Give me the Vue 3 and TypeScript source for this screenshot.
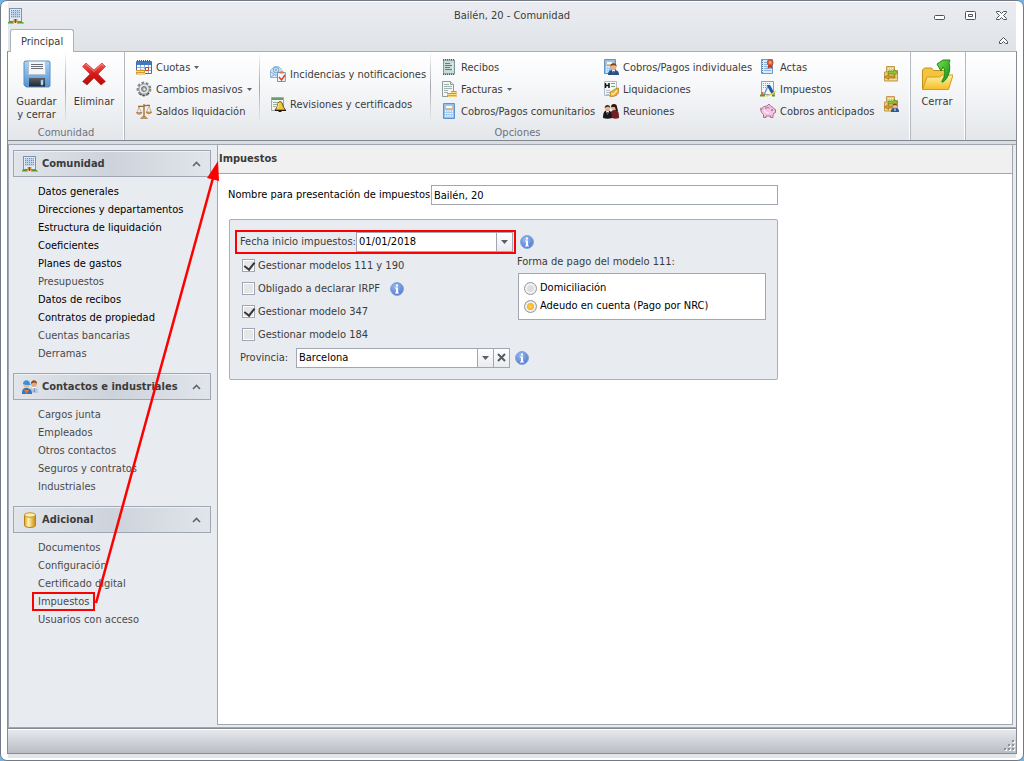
<script setup lang="ts">
import { ref } from 'vue'

interface Command {
  label: string
  icon: string
  menu?: boolean
}
interface Section {
  title: string
  icon: string
  items: { text: string; strong?: boolean; marked?: boolean }[]
}

const columns: Command[][] = [
  [
    { label: 'Cuotas', icon: 'calendar', menu: true },
    { label: 'Cambios masivos', icon: 'gear', menu: true },
    { label: 'Saldos liquidación', icon: 'scales' },
  ],
  [
    { label: 'Incidencias y notificaciones', icon: 'mail' },
    { label: 'Revisiones y certificados', icon: 'bell' },
  ],
  [
    { label: 'Recibos', icon: 'receipt' },
    { label: 'Facturas', icon: 'invoice', menu: true },
    { label: 'Cobros/Pagos comunitarios', icon: 'calc' },
  ],
  [
    { label: 'Cobros/Pagos individuales', icon: 'calcuser' },
    { label: 'Liquidaciones', icon: 'settle' },
    { label: 'Reuniones', icon: 'people' },
  ],
  [
    { label: 'Actas', icon: 'minutes' },
    { label: 'Impuestos', icon: 'tax' },
    { label: 'Cobros anticipados', icon: 'pig' },
  ],
  [
    { label: '', icon: 'transfer' },
    { label: '', icon: 'transferuser' },
  ],
]

const sections: Section[] = [
  {
    title: 'Comunidad',
    icon: 'building',
    items: [
      { text: 'Datos generales', strong: true },
      { text: 'Direcciones y departamentos', strong: true },
      { text: 'Estructura de liquidación', strong: true },
      { text: 'Coeficientes', strong: true },
      { text: 'Planes de gastos', strong: true },
      { text: 'Presupuestos' },
      { text: 'Datos de recibos', strong: true },
      { text: 'Contratos de propiedad', strong: true },
      { text: 'Cuentas bancarias' },
      { text: 'Derramas' },
    ],
  },
  {
    title: 'Contactos e industriales',
    icon: 'workers',
    items: [
      { text: 'Cargos junta' },
      { text: 'Empleados' },
      { text: 'Otros contactos' },
      { text: 'Seguros y contratos' },
      { text: 'Industriales' },
    ],
  },
  {
    title: 'Adicional',
    icon: 'database',
    items: [
      { text: 'Documentos' },
      { text: 'Configuración' },
      { text: 'Certificado digital' },
      { text: 'Impuestos', marked: true },
      { text: 'Usuarios con acceso' },
    ],
  },
]

const taxName = ref('Bailén, 20')
const startDate = ref('01/01/2018')
const province = ref('Barcelona')
const payment = ref('nrc')
const models = ref([
  { text: 'Gestionar modelos 111 y 190', on: true, info: false },
  { text: 'Obligado a declarar IRPF', on: false, info: true },
  { text: 'Gestionar modelo 347', on: true, info: false },
  { text: 'Gestionar modelo 184', on: false, info: false },
])
</script>

<template>
  <div class="window">
    <svg class="defs" width="0" height="0" aria-hidden="true">
      <defs>
        <linearGradient id="gBlue" x1="0" y1="0" x2="0" y2="1"><stop offset="0" stop-color="#a9d4f5" /><stop offset="1" stop-color="#4f93d4" /></linearGradient>
        <linearGradient id="gRed" x1="0" y1="0" x2="0" y2="1"><stop offset="0" stop-color="#f0605a" /><stop offset="0.5" stop-color="#d41a1a" /><stop offset="1" stop-color="#b50d0d" /></linearGradient>
        <linearGradient id="gGold" x1="0" y1="0" x2="0" y2="1"><stop offset="0" stop-color="#fff0a0" /><stop offset="1" stop-color="#f6bd28" /></linearGradient>
        <linearGradient id="gDb" x1="0" y1="0" x2="1" y2="0"><stop offset="0" stop-color="#e0a020" /><stop offset="0.35" stop-color="#fff3b0" /><stop offset="1" stop-color="#d08a08" /></linearGradient>
        <linearGradient id="gGreen" x1="0" y1="0" x2="1" y2="1"><stop offset="0" stop-color="#7be04a" /><stop offset="1" stop-color="#158c18" /></linearGradient>
        <linearGradient id="gSteel" x1="0" y1="0" x2="0" y2="1"><stop offset="0" stop-color="#5a6068" /><stop offset="1" stop-color="#22262b" /></linearGradient>
        <radialGradient id="gInfo" cx="0.4" cy="0.3" r="0.8"><stop offset="0" stop-color="#9dbcf0" /><stop offset="1" stop-color="#4672cc" /></radialGradient>
      </defs>
      <symbol id="building" viewBox="0 0 16 16">
        <rect x="1.5" y="0.5" width="12" height="13" fill="#e3ecf6" stroke="#7e91ad" />
        <path d="M3 2h9v8H3z" fill="#bcd3ea" />
        <path d="M3 2.500h9M3 4.500h9M3 6.500h9M3 8.500h9" stroke="#6f94be" stroke-dasharray="1 1" />
        <path d="M5.500 11h4l-.5 3.500h-3z" fill="#d9822f" /><path d="M7 11h1v4H7z" fill="#8d4413" />
        <path d="M0 15.500c0-2 1.500-2.500 2.500-2 1-1.500 2.500-.5 2.500.5l1 1.500zM9 15.500c0-1.500 1-2 2-1.500 1-1.500 2.500-1 3 0 1 0 1.800.5 2 1.500z" fill="#5d9a2a" />
      </symbol>
      <symbol id="floppy" viewBox="0 0 28 28">
        <path d="M2 1h24l1 1v24l-1 1H3l-2-2V2z" fill="url(#gBlue)" stroke="#5a8fc4" />
        <path d="M5.500 1.500h17v13h-17z" fill="#f4f6f8" stroke="#b4c4d4" />
        <path d="M8 4.500h12M8 6.500h12M8 8.500h12" stroke="#6c7076" />
        <path d="M6 18h16v8.500H6z" fill="url(#gSteel)" /><path d="M18 20h2v5h-2z" fill="#cbe3f7" stroke="#7eb3e0" stroke-width=".6" />
      </symbol>
      <symbol id="cross" viewBox="0 0 24 24">
        <path d="M4 1l8 7 8-7 3.500 3.500-7.500 7.500 7.500 7.500L19 23l-7-7-7 7-4.500-3.500L8 12 .5 4.500z" fill="url(#gRed)" stroke="#c22" stroke-width=".6" />
        <path d="M4 2l8 7.500L20 2l2 2" fill="none" stroke="#f6908a" stroke-width=".8" />
      </symbol>
      <symbol id="calendar" viewBox="0 0 16 16">
        <path d="M.5 2.500h15v12H.5z" fill="#fff" stroke="#3f6fb0" /><path d="M1 3h14v3H1z" fill="#3f7ac4" />
        <path d="M1 1.500h14" stroke="#555" stroke-dasharray="1 1" />
        <path d="M4.500 6v8M8.500 6v8M12.500 6v8M1 8.500h14M1 11.500h14" stroke="#8cb2de" />
        <path d="M9.500 8.500h3v3h-3z" fill="#fff" stroke="#d93a20" />
        <path d="M0 11h5v-1h4v5.500H0z" fill="#d39b2c" /><path d="M0 12.500h8M1 14.500h8M5 10.500h4" stroke="#f5d980" />
      </symbol>
      <symbol id="gear" viewBox="0 0 16 16">
        <circle cx="8" cy="8" r="6.200" fill="none" stroke="#85888c" stroke-width="2.400" stroke-dasharray="2.600 1.730" />
        <circle cx="8" cy="8" r="5.200" fill="#e3e4e6" stroke="#85888c" stroke-width=".8" /><circle cx="8" cy="8" r="2.400" fill="#aeb1b5" stroke="#66696d" /><circle cx="8.500" cy="8.500" r="1" fill="#f6f6f6" />
        <path d="M4 13c3 2.500 7 2 9-1.500" fill="none" stroke="#4a4c50" stroke-width="1.200" stroke-dasharray="2 1" />
      </symbol>
      <symbol id="scales" viewBox="0 0 16 16">
        <path d="M8 1v13M2 3.500c3-.5 4 .5 6-.5s4-.5 6-.5" fill="none" stroke="#9a6a30" stroke-width="1.300" />
        <path d="M3 4L1 9.500M3 4l2.500 5.500M13 3l-2.500 6M13 3l2.200 6" fill="none" stroke="#c9a06c" stroke-width=".8" />
        <path d="M.3 9.500h5.700c-.5 2.400-5.200 2.400-5.700 0zM10 9h5.700c-.5 2.400-5.200 2.400-5.700 0zM4.500 15.500l2-2h3l2 2z" fill="#d39a52" stroke="#94632a" stroke-width=".5" />
      </symbol>
      <symbol id="mail" viewBox="0 0 16 16">
        <path d="M.5 4.500L4 .8h5l3 3.700v7H.5z" fill="#d6e8f7" stroke="#8fb5d8" /><path d="M1 6l5 3.500L11 6M1 11l4-3" fill="none" stroke="#7fabd4" />
        <circle cx="6" cy="4" r="2.800" fill="#c5e0f5" stroke="#7aa7d0" /><circle cx="6" cy="4" r="1" fill="#7aa7d0" />
        <path d="M7.500 6.500h7.800v9H7.500z" fill="#f4f7fb" stroke="#7b90b4" /><path d="M9.500 5.500h4v2h-4z" fill="#e5763b" /><path d="M9 11l2.500 3 3.500-5" fill="none" stroke="#d8432c" stroke-width="1.500" />
      </symbol>
      <symbol id="bell" viewBox="0 0 16 16">
        <path d="M1.500 1.500h12v13h-12z" fill="#f3f4f2" stroke="#a1a8aa" /><path d="M2 2h11v2H2z" fill="#6d9b70" /><path d="M3 6.500h8M3 8.500h6M3 10.500h3" stroke="#9ab09c" />
        <path d="M10 5.500c3 .5 2.500 4 3.500 5.500l2 3H5l2-3c1-2 0-4.500 3-5.500z" fill="#f4c536" stroke="#4a350c" stroke-width=".8" /><path d="M9 7c-1 1-.5 3-1.500 5" fill="none" stroke="#fff2a6" /><path d="M5 14h11v1h-4l-1 1H9l-1-1H5z" fill="#241b0c" />
      </symbol>
      <symbol id="receipt" viewBox="0 0 16 16">
        <path d="M2.500 1v14h11V1z" fill="#c9dbd9" stroke="#7d9a9b" /><path d="M2 .7h12M2 15.300h12" stroke="#4b6367" stroke-width="1.400" stroke-dasharray="1 1" />
        <path d="M4 4.500h5M4 6.500h7M4 8.500h5M4 10.500h7" stroke="#57808a" /><path d="M11.500 4v8" stroke="#e3eded" />
      </symbol>
      <symbol id="invoice" viewBox="0 0 16 16">
        <path d="M1.500.5h8l3 3v12h-11z" fill="#f4f6f3" stroke="#8d9d99" /><path d="M9.500.5v3h3" fill="#dfe6e2" stroke="#8d9d99" /><path d="M3 3.500h5M3 5.500h8M3 7.500h8M3 9.500h4M3 11.500h4" stroke="#a3b3ad" />
        <path d="M6 12h4v-2h5.500v6H6z" fill="#cf962b" /><path d="M6 13.500h9M7 15.300h8M10 11.500h5" stroke="#f7dd88" />
      </symbol>
      <symbol id="calc" viewBox="0 0 16 16">
        <path d="M2.500.5h11v15h-11z" fill="#8bc1ef" stroke="#5a97d0" /><path d="M4.500 2.500h7v3h-7z" fill="#f6f9fc" stroke="#e7b98a" />
        <path d="M4 8h8M4 10.500h8M4 13h8" stroke="#fff" stroke-width="1.500" stroke-dasharray="1.500 .7" />
      </symbol>
      <symbol id="calcuser" viewBox="0 0 16 16">
        <path d="M1.500.5h11v14h-11z" fill="#8bc1ef" stroke="#5a97d0" /><path d="M3.500 2.500h6v3h-6z" fill="#f6f9fc" stroke="#e7b98a" /><path d="M3 8h4M3 10.500h3M3 13h3" stroke="#fff" stroke-width="1.400" stroke-dasharray="1.500 .7" />
        <path d="M5 16c0-4 2-5 5.500-5S16 12 16 16z" fill="#2b4d86" /><path d="M9 11l1.500 4 1.500-4z" fill="#fff" /><circle cx="10.500" cy="7.500" r="3.100" fill="#eab283" /><path d="M7.300 7.500C7 3 14 3 13.700 7.500 12 5.500 9 6 7.300 7.500z" fill="#7c3f1a" /><path d="M10 12h1v3h-1z" fill="#c92a1c" />
      </symbol>
      <symbol id="settle" viewBox="0 0 16 16">
        <path d="M1.500.5h12v14h-12z" fill="#f7f8f8" stroke="#b4babd" /><path d="M2.500 2v5M6 2v5M2.500 4.500h4" stroke="#111" stroke-width="1.500" /><path d="M8 2.500h4M8 5.500h4" stroke="#6ba86b" /><path d="M3 9.500h4M3 11.500h4M3 13.500h3" stroke="#afbec9" />
        <path d="M7 11c3-1 5-4 8.500-4v5c-2 3-5 4-8.500 3.500z" fill="#edb23c" stroke="#a66b15" stroke-width=".6" /><path d="M8 12.500l2 1 4-4" fill="none" stroke="#fff0a6" stroke-width="1.200" />
      </symbol>
      <symbol id="people" viewBox="0 0 16 16">
        <path d="M7 14c0-6 2-7 5-7s4 2 4 8c-3 1-6 1-9-1z" fill="#722024" /><circle cx="11" cy="4" r="3" fill="#e5ad88" /><path d="M8 4c0-4 6-4 6 0l1 4h-2l-1-4z" fill="#2a1812" />
        <path d="M0 15c0-6 1.500-7.500 4.500-7.500S9 9 9 15c-3 1-6 1-9 0z" fill="#18181b" /><path d="M3 8l1.500 4L6 8z" fill="#fff" /><circle cx="4.500" cy="5" r="2.700" fill="#e9b692" /><path d="M1.700 5C1.500 1 7.500 1 7.200 5 5.500 3 4 4 1.700 5z" fill="#4b2614" /><path d="M4 9h1v3H4z" fill="#c9231d" />
      </symbol>
      <symbol id="minutes" viewBox="0 0 16 16">
        <path d="M1.500.5h11v14h-11z" fill="#d9eafa" stroke="#6c9cce" /><path d="M2.500 1v13" stroke="#4e7eb4" stroke-dasharray="1 1" /><path d="M4 3.500h4M4 5.500h4M4 7.500h5M4 9.500h7M4 11.500h7" stroke="#8db5dd" />
        <path d="M8.500 5l-1 5 2.500-1.500L12.500 10l-1-5z" fill="#c33a1c" /><circle cx="10.200" cy="3.500" r="3" fill="#e0663a" stroke="#a93319" stroke-width=".6" /><circle cx="10.200" cy="3.500" r="1.200" fill="#f6aa84" />
      </symbol>
      <symbol id="tax" viewBox="0 0 16 16">
        <path d="M1.500.5h12v13h-12z" fill="#f3f7fb" stroke="#8fa0b8" /><path d="M3 2.500h8M3 4.500h6M3 6.500h4" stroke="#7ba7d5" stroke-dasharray="1 1" />
        <path d="M6.500 4h3.500l5 9h-3.500z" fill="#1f5a9e" /><path d="M7.500 6L4.500 13" stroke="#5d8fc4" stroke-width="1.200" /><path d="M0 14.500h5M12 14.500h3" stroke="#5d9a2a" stroke-width="2" /><path d="M6 15c4-.5 7-2 9.500-5" fill="none" stroke="#f3d33a" stroke-width="1.300" /><path d="M1.500 11h2v3h-2z" fill="#c9752a" />
      </symbol>
      <symbol id="pig" viewBox="0 0 16 16">
        <path d="M1 7c1-3 4-4 6-4l2-2 2 2.500c2 .5 2.500 1.500 3 2.500l1.500.5v3L14 10l-1 2v2.500h-2.500V13H6v1.500H3.500v-3C1.500 10 1 9 1 7z" fill="#f2c6de" stroke="#b0689c" />
        <path d="M5 5.500c1.500-1 3-1 4.500-.5" fill="none" stroke="#a0608f" /><circle cx="12" cy="7" r=".8" fill="#70315f" /><path d="M1 7c-1-.5-1-2 .5-2" fill="none" stroke="#b0689c" /><path d="M4 7c1 2 3 3 5 3" fill="none" stroke="#fdeaf5" stroke-width="1.300" />
      </symbol>
      <symbol id="transfer" viewBox="0 0 16 16">
        <path d="M3.500.5h8v4h3v10.500h-13V6h2z" fill="#eecb7c" stroke="#c09a50" /><path d="M5 2.500h6M5 4.500h6M2.500 13.500h12" stroke="#fff1c0" stroke-dasharray="1 1" />
        <path d="M5 5h6V3.500l4 3-4 3V8H5z" fill="#91c22f" stroke="#517c12" stroke-width=".6" /><path d="M12 12H5.500v1.500L1.500 11l4-2.500V10H12z" fill="#dba02a" stroke="#93610f" stroke-width=".6" />
      </symbol>
      <symbol id="transferuser" viewBox="0 0 16 16">
        <use href="#transfer" width="16" height="16" />
        <path d="M8 16c0-3 1-4 4-4s4 1 4 4z" fill="#2c5799" /><circle cx="12" cy="10" r="2.300" fill="#edb98d" /><path d="M9.500 10c0-3.500 5-3.500 5 0-1.500-1.500-3.500-1-5 0z" fill="#7b4320" /><path d="M11.500 12.500h1V15h-1z" fill="#fff" />
      </symbol>
      <symbol id="folder" viewBox="0 0 32 32">
        <path d="M1.500 11l2-2h7l2 2.500h11l2 2V30h-24z" fill="#f2c440" stroke="#c2901c" /><path d="M1.500 30.500L6 18h13l2-2h11l-4.500 14.500z" fill="url(#gGold)" stroke="#d39b1c" />
        <path d="M16 5l6-4h7l-1 3c2 5 0 15-6 19-1 .5-1.500-.5-1-1 3-5 4-10 1-14l-2 4-4-7z" fill="url(#gGreen)" stroke="#168a1a" />
      </symbol>
      <symbol id="workers" viewBox="0 0 16 16">
        <path d="M8 14c0-5 1-6 4-6s4 2 4 6z" fill="#b9c9dc" /><path d="M10 8l2 4 2-4z" fill="#fff" /><path d="M11.700 9h1v4h-1z" fill="#4777ad" /><circle cx="12" cy="5" r="2.900" fill="#e6a877" /><path d="M9 5c-.5-5 6.500-5 6 0-1.500-2-4-2-6 0z" fill="#8e4a1c" />
        <path d="M0 15c0-4.500 1-6 4.500-6S10 11 10 15z" fill="#2b78c8" /><path d="M2 11l2.500 4L7 11z" fill="#e07b2d" /><circle cx="4.500" cy="6" r="3" fill="#eebb8d" /><path d="M1 5c0-5 7-5 7 0l1 1H4z" fill="#3c91df" />
      </symbol>
      <symbol id="database" viewBox="0 0 16 16">
        <path d="M2.500 3v10.500c0 2.600 11 2.600 11 0V3z" fill="url(#gDb)" stroke="#b9811b" /><ellipse cx="8" cy="3" rx="5.500" ry="2.200" fill="#fff0ae" stroke="#c6922b" />
      </symbol>
      <symbol id="info" viewBox="0 0 14 14">
        <circle cx="7" cy="7" r="6.400" fill="url(#gInfo)" stroke="#7f9fdc" /><path d="M6 2.500h2v2H6zM5 5.500h3v5h1v1H5v-1h1v-4H5z" fill="#fff" />
      </symbol>
      <symbol id="up" viewBox="0 0 9 6"><path d="M1 5l3.500-3.500L8 5" fill="none" stroke="#5f6570" stroke-width="1.600" /></symbol>
    </svg>

    <header class="titlebar">
      <svg class="ico"><use href="#building" /></svg>
      <h1>Bailén, 20 - Comunidad</h1>
      <div class="controls">
        <button type="button" aria-label="Minimizar"><svg width="13" height="13" viewBox="0 0 13 13"><rect x="1.500" y="5.500" width="10" height="4" rx="1" fill="#fff" stroke="#4c525a" /></svg></button>
        <button type="button" aria-label="Maximizar"><svg width="13" height="13" viewBox="0 0 13 13"><rect x="1.500" y="1.500" width="10" height="8" rx="1" fill="#fff" stroke="#4c525a" /><path d="M4.500 4.500h4v2h-4z" fill="#fff" stroke="#4c525a" /></svg></button>
        <button type="button" aria-label="Cerrar ventana"><svg width="13" height="13" viewBox="0 0 13 13"><path d="M1.500 1.500h3l2 2 2-2h3v1l-3 3 3 3v1h-3l-2-2-2 2h-3v-1l3-3-3-3z" fill="#fff" stroke="#4c525a" /></svg></button>
      </div>
    </header>

    <nav class="tabs">
      <button class="tab" type="button">Principal</button>
      <button class="collapse" type="button" aria-label="Contraer cinta"><svg width="11" height="9" viewBox="0 0 11 9"><path d="M5.500 1.500l4 4v2h-2l-2-2-2 2h-2v-2z" fill="#fff" stroke="#4c525a" /></svg></button>
    </nav>

    <div class="shell">
      <section class="ribbon">
        <div class="group">
          <div class="large-row">
            <button class="large save" type="button"><svg width="28" height="28"><use href="#floppy" /></svg><span>Guardar<br />y cerrar</span></button>
            <button class="large" type="button"><svg class="delete" width="24" height="24"><use href="#cross" /></svg><span>Eliminar</span></button>
          </div>
          <div class="caption">Comunidad</div>
        </div>
        <div class="group">
          <div class="columns">
            <div v-for="(column, c) in columns" :key="c" class="column" :class="{ two: column.length === 2, ruled: c < 2 }">
              <button v-for="cmd in column" :key="cmd.icon" class="command" type="button" :aria-label="cmd.label || 'Traspaso'">
                <svg class="ico"><use :href="'#' + cmd.icon" /></svg>
                <span v-if="cmd.label">{{ cmd.label }}</span>
                <svg v-if="cmd.menu" width="5" height="3" viewBox="0 0 5 3"><path d="M0 0h5L2.500 3z" fill="#5a5f68" /></svg>
              </button>
            </div>
          </div>
          <div class="caption">Opciones</div>
        </div>
        <div class="group">
          <button class="large close" type="button"><svg width="32" height="32"><use href="#folder" /></svg><span>Cerrar</span></button>
        </div>
      </section>

      <div class="body">
        <aside class="sidebar">
          <section v-for="section in sections" :key="section.title">
            <button class="section-head" type="button">
              <svg class="ico"><use :href="'#' + section.icon" /></svg>
              <span>{{ section.title }}</span>
              <svg width="9" height="6"><use href="#up" /></svg>
            </button>
            <ul>
              <li v-for="item in section.items" :key="item.text">
                <a href="#" :class="{ strong: item.strong, marked: item.marked }">{{ item.text }}</a>
              </li>
            </ul>
          </section>
        </aside>

        <main class="main">
          <h2>Impuestos</h2>
          <form class="form" @submit.prevent>
            <div class="name-row">
              <label for="tax-name">Nombre para presentación de impuestos:</label>
              <input id="tax-name" v-model="taxName" class="box" type="text" />
            </div>
            <div class="panel">
              <div class="date-row">
                <div class="date-mark">
                  <label for="start-date">Fecha inicio impuestos:</label>
                  <div class="combo">
                    <input id="start-date" v-model="startDate" type="text" />
                    <button class="mini" type="button" aria-label="Abrir calendario"><svg width="7" height="4" viewBox="0 0 7 4"><path d="M0 0h7L3.500 4z" fill="#5a5f68" /></svg></button>
                  </div>
                </div>
                <svg class="info"><use href="#info" /></svg>
              </div>
              <div class="options">
                <div class="checks">
                  <div v-for="model in models" :key="model.text" class="check-row">
                    <label><input v-model="model.on" type="checkbox" />{{ model.text }}</label>
                    <svg v-if="model.info" class="info"><use href="#info" /></svg>
                  </div>
                </div>
                <fieldset class="payment">
                  <legend>Forma de pago del modelo 111:</legend>
                  <div class="radios">
                    <label><input v-model="payment" type="radio" name="payment" value="bank" />Domiciliación</label>
                    <label><input v-model="payment" type="radio" name="payment" value="nrc" />Adeudo en cuenta (Pago por NRC)</label>
                  </div>
                </fieldset>
              </div>
              <div class="province-row">
                <label for="province">Provincia:</label>
                <div class="combo">
                  <select id="province" v-model="province"><option value=""></option><option>Barcelona</option></select>
                  <span class="mini"><svg width="7" height="4" viewBox="0 0 7 4"><path d="M0 0h7L3.500 4z" fill="#5a5f68" /></svg></span>
                  <button class="mini" type="button" aria-label="Borrar provincia" @click="province = ''"><svg width="9" height="9" viewBox="0 0 9 9"><path d="M1 1l7 7M8 1L1 8" stroke="#565b63" stroke-width="2" /></svg></button>
                </div>
                <svg class="info"><use href="#info" /></svg>
              </div>
            </div>
          </form>
        </main>
      </div>

      <footer class="status">
        <svg width="11" height="11" viewBox="0 0 11 11"><path d="M9 1h2v2H9zM9 5h2v2H9zM5 5h2v2H5zM9 9h2v2H9zM5 9h2v2H5zM1 9h2v2H1z" fill="#fff" /><path d="M8 0h2v2H8zM8 4h2v2H8zM4 4h2v2H4zM8 8h2v2H8zM4 8h2v2H4zM0 8h2v2H0z" fill="#8d929a" /></svg>
      </footer>
    </div>
    <div class="base"></div>

    <svg class="pointer" width="230" height="620" viewBox="0 0 230 620" aria-hidden="true">
      <path d="M96 603L213 178" stroke="#f00" stroke-width="2.500" fill="none" />
      <path d="M218 161l-11 17 12 3z" fill="#f00" />
    </svg>
  </div>
</template>

<style>
html,
body {
  background: #74b3e6;
}
</style>

<style scoped>
* {
  box-sizing: border-box;
}
.window {
  position: relative;
  display: flex;
  flex-direction: column;
  min-height: 100vh;
  padding: 1px 6px 2px;
  border: 1px solid #737985;
  border-radius: 7px;
  background: #fff;
  color: #3b3b3b;
  font: 11px/14px "DejaVu Sans Condensed", "Noto Sans", sans-serif;
}
.defs,
.pointer {
  position: absolute;
  top: -1px;
  left: -1px;
  pointer-events: none;
}
button,
input,
select {
  margin: 0;
  padding: 0;
  border: 0;
  border-radius: 0;
  background: none;
  color: inherit;
  font: inherit;
}
svg {
  display: block;
  flex: none;
}
.ico {
  width: 16px;
  height: 16px;
}
.info {
  width: 14px;
  height: 14px;
}
.titlebar {
  display: grid;
  grid-template-columns: 96px 1fr 96px;
  align-items: center;
  height: 28px;
  margin: 0 1px;
  background: linear-gradient(#ebecf1, #e4e7eb);
}
h1 {
  margin: 0;
  text-align: center;
  font: inherit;
}
.controls {
  display: flex;
  justify-content: flex-end;
  gap: 18px;
  padding-right: 8px;
}
.tabs {
  display: flex;
  justify-content: space-between;
  align-items: center;
  height: 21px;
  margin: 0 1px;
  padding: 0 7px 0 2px;
  background: linear-gradient(#e4e7eb, #dfe3e6);
}
.tab {
  height: 23px;
  padding: 2px 10px 0;
  border: 1px solid #adb3bb;
  border-bottom: 0;
  border-radius: 3px 3px 0 0;
  background: #fff;
  z-index: 1;
}
.shell {
  flex: 1;
  display: flex;
  flex-direction: column;
  border: 1px solid #868b94;
  border-top-color: #a9aeb5;
}
.ribbon {
  display: flex;
  height: 89px;
  border-bottom: 1px solid #80868f;
  background: linear-gradient(#fff, #f6f7f9 40%, #e3e6ea);
}
.group {
  display: flex;
  flex-direction: column;
  justify-content: space-between;
  border-right: 1px solid #b4b9c0;
  box-shadow: inset -1px 0 #fff;
}
.caption {
  height: 15px;
  line-height: 16px;
  text-align: center;
  color: #6c7280;
}
.large-row {
  display: flex;
}
.large {
  display: flex;
  flex-direction: column;
  align-items: center;
  gap: 4px;
  width: 58px;
  height: 71px;
  padding: 8px 2px 0 0;
  line-height: 13px;
}
.save {
  padding-right: 0;
  border-right: 1px solid;
  border-image: linear-gradient(#fff0, #a0a5ad, #fff0) 1;
  gap: 7px;
}
.delete {
  margin: 2px 0 5px;
}
.close {
  width: 54px;
  padding-top: 7px;
}
.columns {
  display: grid;
  grid-template-columns: 134px 171px 162px 157px 123px 31px;
  padding-left: 7px;
}
.column {
  display: flex;
  flex-direction: column;
  padding-top: 4px;
}
.ruled {
  margin-right: 6px;
  border-right: 1px solid;
  border-image: linear-gradient(#fff0, #a0a5ad, #fff0) 1;
}
.command {
  display: flex;
  align-items: center;
  gap: 4px;
  height: 22px;
  padding: 0 4px;
  white-space: nowrap;
}
.command span {
  padding-top: 2px;
}
.two .command {
  height: 30px;
}
.two {
  padding-top: 7px;
}
.body {
  flex: 1;
  display: grid;
  grid-template-columns: 208px 1fr;
  margin-top: 3px;
  padding-right: 3px;
  padding-bottom: 2px;
  border: 1px solid #a0a7b3;
  border-right: 0;
  background: #e8ebf0;
  box-shadow: 0 -3px #dadde2;
}
.sidebar {
  padding: 5px 6px 0 4px;
}
.section-head {
  display: flex;
  align-items: center;
  gap: 4px;
  width: 100%;
  height: 27px;
  padding: 0 9px 0 8px;
  border: 1px solid #a0a7b3;
  background: linear-gradient(90deg, #e1e5eb, #cdd3db 50%, #e1e5eb);
  box-shadow: inset 0 1px #eef0f4;
  font-weight: bold;
  text-align: left;
}
.section-head span {
  flex: 1;
  white-space: nowrap;
}
ul {
  margin: 6px 0 10px;
  padding: 0 0 0 25px;
  list-style: none;
}
li {
  line-height: 18px;
}
a {
  color: #4a4a4a;
  text-decoration: none;
}
a.strong {
  color: #000;
}
.marked {
  position: relative;
}
.marked::after {
  content: '';
  position: absolute;
  inset: -3px -6px;
  border: 2px solid #f00;
}
.main {
  border: 1px solid #a0a7b3;
  border-top: 0;
  background: #fff;
}
h2 {
  height: 29px;
  margin: 0;
  padding-left: 1px;
  border-bottom: 1px solid #a0a7b3;
  background: #f0f0f0;
  font-size: 11px;
  line-height: 27px;
}
.form {
  max-width: 560px;
  padding: 11px 0 0 10px;
}
.name-row {
  display: grid;
  grid-template-columns: 203px 1fr;
  align-items: center;
  color: #000;
  white-space: nowrap;
}
.box,
.combo {
  height: 20px;
  border: 1px solid #a0a7b3;
  background: #fff;
  color: #000;
}
.box {
  width: 100%;
  padding: 0 2px;
}
.panel {
  margin: 14px 0 0 1px;
  padding: 10px 5px;
  border: 1px solid #a9afba;
  border-radius: 2px;
  background: #e8ebf0;
}
.date-row,
.province-row,
.check-row {
  display: flex;
  align-items: center;
  gap: 5px;
}
.date-row {
  gap: 4px;
}
.date-mark {
  display: grid;
  grid-template-columns: 116px 157px;
  align-items: center;
  padding: 0 1px 0 3px;
  border: 2px solid #f00;
  white-space: nowrap;
}
.combo {
  position: relative;
  display: flex;
}
.combo input,
.combo select {
  flex: 1;
  min-width: 0;
  padding: 0 2px;
  appearance: none;
}
.mini {
  display: flex;
  align-items: center;
  justify-content: center;
  width: 16px;
  border-left: 1px solid #a0a7b3;
  background: linear-gradient(#fff, #e9ebef);
}
span.mini {
  pointer-events: none;
}
.options {
  display: grid;
  grid-template-columns: 282px 1fr;
}
.check-row {
  gap: 10px;
  height: 23px;
  padding-left: 7px;
}
.check-row label,
.radios label {
  display: flex;
  align-items: center;
  gap: 3px;
  white-space: nowrap;
}
input[type='checkbox'] {
  appearance: none;
  width: 13px;
  height: 13px;
  border: 1px solid #a0a7b3;
  background: #e6e6e6;
  box-shadow: inset 0 0 0 1px #fff;
}
input[type='checkbox']:checked::before {
  content: '';
  display: block;
  width: 5px;
  height: 8px;
  margin: 0 0 0 3px;
  border: solid #33363b;
  border-width: 0 2px 2px 0;
  transform: rotate(38deg);
}
input[type='radio'] {
  appearance: none;
  width: 13px;
  height: 13px;
  border: 1px solid #9599a1;
  border-radius: 50%;
  background: #dedede;
  box-shadow: inset 0 0 0 2px #f3f3f3;
}
input[type='radio']:checked {
  background: radial-gradient(#ffe056, #f0980c 60%);
}
.payment {
  margin: 0 6px 0 0;
  padding: 0;
  border: 0;
}
legend {
  height: 19px;
  padding: 1px 0 0;
}
.radios {
  display: flex;
  flex-direction: column;
  margin-left: 1px;
  padding: 5px 5px 4px;
  border: 1px solid #a0a7b3;
  background: #fff;
  color: #000;
}
.radios label {
  height: 18px;
}
.province-row {
  height: 23px;
  padding-left: 5px;
}
.province-row label {
  width: 51px;
}
.province-row .combo {
  width: 214px;
}
.status {
  display: flex;
  align-items: flex-end;
  justify-content: flex-end;
  height: 25px;
  padding: 0 1px 2px;
  border-top: 1px solid #868b94;
  background: linear-gradient(#e8eaee, #b9bdc4);
  box-shadow: inset 0 1px #fff;
}
.base {
  height: 4px;
  margin: 0 1px;
  background: #e2e6e9;
}
</style>
